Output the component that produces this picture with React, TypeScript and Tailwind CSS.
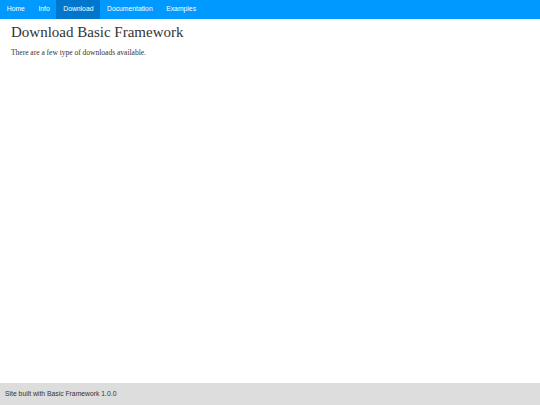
const links = ["Home", "Info", "Download", "Documentation", "Examples"];

export default function App() {
  const active = "Download";

  return (
    <div className="min-h-screen flex flex-col bg-white" style={{ fontFamily: '"Liberation Sans", Arial, sans-serif' }}>
      {/* Top nav */}
      <nav className="flex h-[19px] bg-[#0099ff]">
        {links.map((l) => (
          <a
            key={l}
            href="#"
            className={`flex items-center px-[6.75px] text-[6.8px] text-white ${l === active ? "bg-[#0077cc]" : ""}`}
          >
            {l}
          </a>
        ))}
      </nav>

      {/* Content */}
      <main className="flex-1 pl-[11px] pt-[4.5px] text-[#333]" style={{ fontFamily: '"Liberation Serif", "Times New Roman", serif' }}>
        <h1 className="text-[15px] leading-[17px]">Download Basic Framework</h1>
        <p className="mt-[7px] text-[7.5px] leading-[9px]">There are a few type of downloads available.</p>
      </main>

      {/* Footer */}
      <footer className="h-[22px] flex items-center px-[5px] bg-[#dddddd] text-[6.8px] text-[#333]">
        Site built with Basic Framework 1.0.0
      </footer>
    </div>
  );
}
